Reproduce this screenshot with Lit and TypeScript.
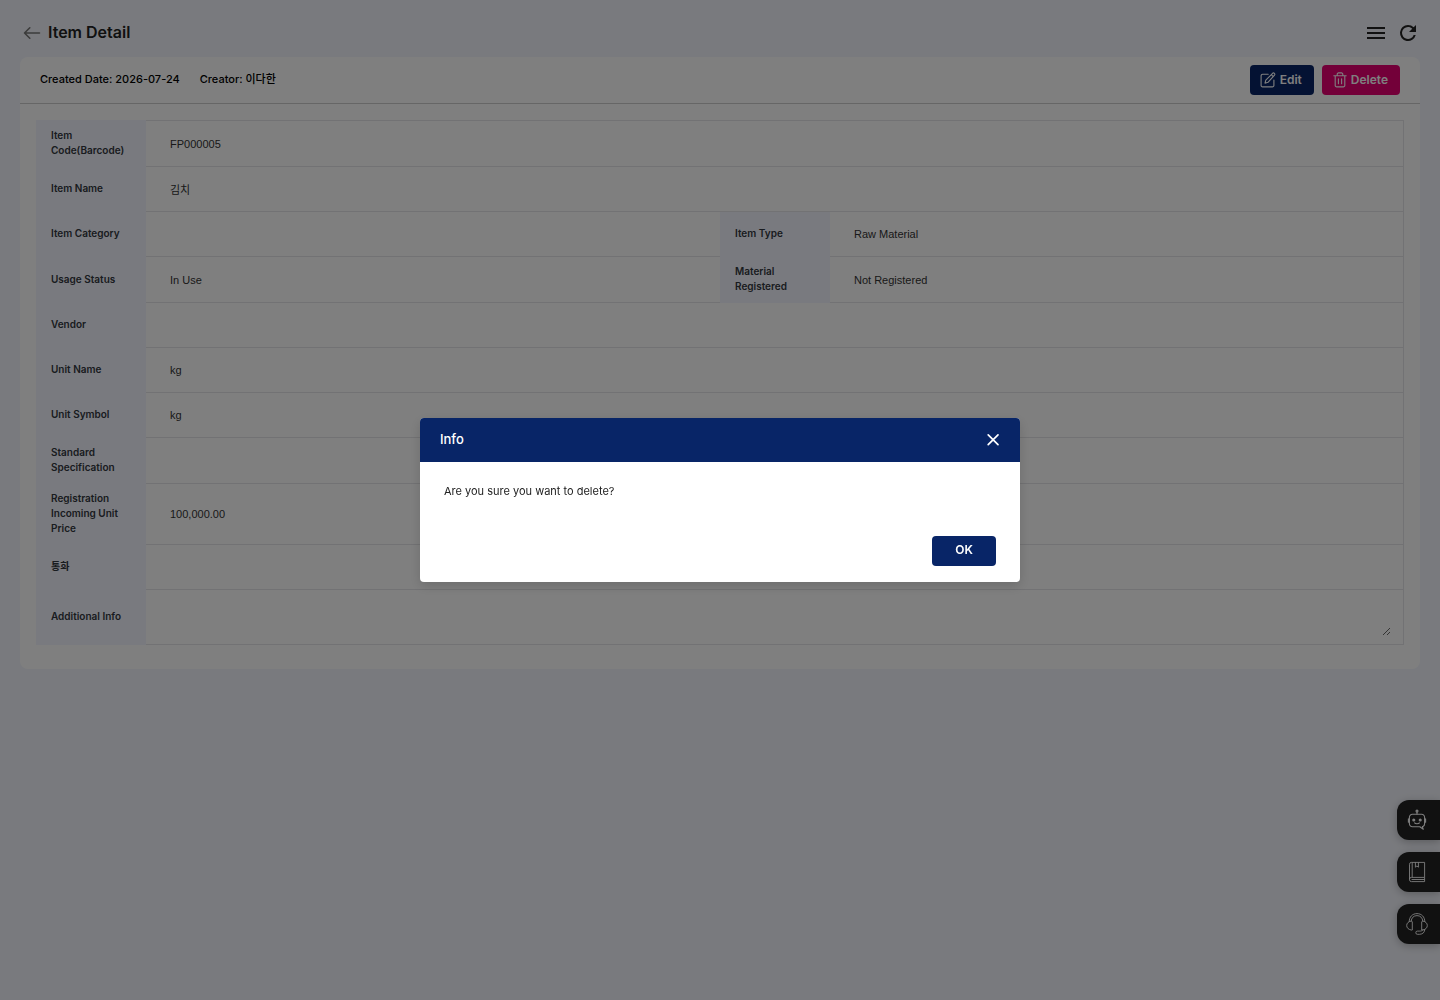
import { LitElement, html, css, svg, nothing } from "lit";
import { customElement, state } from "lit/decorators.js";

interface Field {
  id: string;
  label: string;
  value?: string;
  multiline?: boolean;
}

const ROWS: Field[][] = [
  [{ id: "code", label: "Item Code(Barcode)", value: "FP000005" }],
  [{ id: "name", label: "Item Name", value: "김치" }],
  [
    { id: "category", label: "Item Category" },
    { id: "type", label: "Item Type", value: "Raw Material" },
  ],
  [
    { id: "usage", label: "Usage Status", value: "In Use" },
    { id: "material", label: "Material Registered", value: "Not Registered" },
  ],
  [{ id: "vendor", label: "Vendor" }],
  [{ id: "unit-name", label: "Unit Name", value: "kg" }],
  [{ id: "unit-symbol", label: "Unit Symbol", value: "kg" }],
  [{ id: "spec", label: "Standard Specification" }],
  [{ id: "price", label: "Registration Incoming Unit Price", value: "100,000.00" }],
  [{ id: "currency", label: "통화" }],
  [{ id: "info", label: "Additional Info", multiline: true }],
];

const backIcon = svg`<svg width="18" height="14" viewBox="0 0 18 14" fill="none" stroke="currentColor" stroke-width="1.6" stroke-linecap="round" stroke-linejoin="round"><path d="M16.5 7H1.5M6.8 1.8 1.5 7l5.3 5.2"/></svg>`;
const menuIcon = svg`<svg width="24" height="24" viewBox="0 0 24 24" fill="currentColor"><path d="M3 18h18v-2H3v2zm0-5h18v-2H3v2zm0-7v2h18V6H3z"/></svg>`;
const refreshIcon = svg`<svg width="24" height="24" viewBox="0 0 24 24" fill="currentColor"><path d="M17.65 6.35A7.96 7.96 0 0 0 12 4a8 8 0 1 0 7.73 10h-2.08A6 6 0 1 1 12 6c1.66 0 3.14.69 4.22 1.78L13 11h7V4l-2.35 2.35z"/></svg>`;
const editIcon = svg`<svg width="16" height="16" viewBox="0 0 16 16" fill="none" stroke="currentColor" stroke-width="1.1" stroke-linecap="round" stroke-linejoin="round"><path d="M8.2 2.3H2.6a1.5 1.5 0 0 0-1.5 1.5v9.600a1.500 1.500 0 0 0 1.500 1.500h9.800a1.500 1.500 0 0 0 1.500-1.500V8"/><path d="M12.600 1.300a1.350 1.350 0 0 1 1.900 1.900L8 10.300l-3 .9.8-3 6.800-6.900zM11.300 2.700l1.900 1.900"/></svg>`;
const trashIcon = svg`<svg width="14" height="16" viewBox="0 0 14 16" fill="none" stroke="currentColor" stroke-width="1.1" stroke-linecap="round" stroke-linejoin="round"><path d="M.8 3.8h12.4M4.2 3.6V2.2A1.3 1.3 0 0 1 5.5.9h3a1.3 1.3 0 0 1 1.3 1.3v1.4M2.2 3.8v9.6a1.5 1.5 0 0 0 1.5 1.5h6.6a1.5 1.5 0 0 0 1.5-1.5V3.8M5.4 6.8v5M8.6 6.8v5"/></svg>`;
const closeIcon = svg`<svg width="14" height="14" viewBox="0 0 14 14" fill="none" stroke="currentColor" stroke-width="1.7" stroke-linecap="round"><path d="M2.2 1.800l9.800 9.800M12 1.800l-9.800 9.800"/></svg>`;
const botIcon = svg`<svg width="24" height="24" viewBox="0 0 24 24" fill="none" stroke="currentColor" stroke-width="1.1" stroke-linecap="round" stroke-linejoin="round"><path d="M7.4 6.300h9.200a3 3 0 0 1 3 3v6.400a3 3 0 0 1-1.600 2.700l-.6.2.9 2.700-3.500-2.600H7.400a3 3 0 0 1-3-3V9.300a3 3 0 0 1 3-3z"/><path d="M12 6.100V3.900"/><circle cx="12" cy="3.100" r="1"/><path d="M3.400 10.900v3.400M20.600 10.900v3.400M9.600 14.900c.8 1.200 4 1.200 4.800 0"/><circle cx="8.800" cy="12" r="1" fill="currentColor"/><circle cx="15.200" cy="12" r="1" fill="currentColor"/></svg>`;
const bookIcon = svg`<svg width="24" height="24" viewBox="0 0 24 24" fill="none" stroke="currentColor" stroke-width=".9" stroke-linejoin="round"><path d="M19.6 17.4V2.4H6.4a1.900 1.900 0 0 0-1.900 1.900v15.400a1.900 1.900 0 0 0 1.900 1.900h13.200v-4.200H6.400a1.900 1.900 0 0 0-1.900 2.100M7.200 2.400v15M6.600 19.500h13M10.400 2.400v4.800l1.500-1.200 1.500 1.200V2.400"/></svg>`;
const headsetIcon = svg`<svg width="24" height="24" viewBox="0 0 24 24" fill="none" stroke="currentColor" stroke-width=".9" stroke-linecap="round" stroke-linejoin="round"><path d="M4.200 9.500C4.200 4.800 7.500 1.600 12 1.600s7.800 3.200 7.800 7.900M6.200 9.100C6.400 5.800 8.600 3.600 12 3.600s5.600 2.200 5.800 5.500"/><path d="M7.300 17.600V9.700L6.200 9C3.400 9.600 1.700 11.200 1.700 13.500s1.600 3.900 4.300 4.500zM16.700 17.600V9.700l1.100-.7c2.800.6 4.500 2.200 4.500 4.500s-1.600 3.900-4.300 4.500z"/><path d="M19.800 17.500c-.2 3-2 4.600-5.200 4.800h-2.200a1.600 1.600 0 0 1 0-3.200h1.800c2.200 0 3.400-.3 3.600-1.300"/></svg>`;

@customElement("app-root")
export class AppRoot extends LitElement {
  @state() private confirmOpen = true;

  static styles = css`
    :host {
      display: block;
      position: relative;
      min-height: 100vh;
      box-sizing: border-box;
      padding: 0 20px;
      background: #f3f5fc;
      color: #222;
      font-family: Inter, "Noto Sans CJK KR", sans-serif;
      overflow: hidden;
    }
    *, *::before, *::after { box-sizing: border-box; }
    svg { display: block; flex: none; }
    button {
      display: flex;
      align-items: center;
      justify-content: center;
      margin: 0;
      border: 0;
      padding: 0;
      background: none;
      color: inherit;
      font: inherit;
      cursor: pointer;
    }
    .topbar {
      display: flex;
      align-items: center;
      gap: 8px;
      padding: 21px 0 12px;
    }
    .back { width: 20px; height: 24px; padding-left: 3px; color: #777; }
    h1 { flex: 1; margin: 0; padding-bottom: 2px; font-size: 16px; line-height: 22px; font-weight: 600; }
    .card { border-radius: 8px; background: #fff; overflow: hidden; }
    .card-head {
      display: flex;
      align-items: center;
      gap: 20px;
      min-height: 47px;
      padding: 0 20px;
      border-bottom: 1px solid #ccc;
      color: #000;
      font-size: 11px;
      line-height: 16px;
      font-weight: 500;
    }
    .meta { padding-bottom: 2px; }
    .actions { display: flex; gap: 8px; margin-left: auto; }
    .btn {
      height: 30px;
      padding: 0 12px;
      border-radius: 4px;
      color: #fff;
      background: #082567;
      font-size: 12px;
      line-height: 16px;
      font-weight: 600;
      gap: 4px;
    }
    .edit { padding: 0 12px 0 10px; }
    .delete { padding: 0 12px 0 11px; background: #e60073; }
    .card-body { padding: 16px 16px 24px; }
    table { width: 100%; border-spacing: 0; table-layout: fixed; }
    .label-col { width: 110px; }
    th {
      padding: 7px 15px 9px;
      background: #f2f4ff;
      color: #333840;
      font-size: 10px;
      line-height: 15px;
      font-weight: 600;
      text-align: left;
    }
    td { height: 45px; padding: 0; border-bottom: 1px solid #e5e5e8; }
    td:last-child { border-right: 1px solid #e5e5e8; }
    tr:first-child td { border-top: 1px solid #e5e5e8; }
    tr:first-child th { border-top: 1px solid #f2f4ff; }
    .field {
      display: block;
      width: 100%;
      height: 30px;
      margin: 0;
      border: 0;
      padding: 0 24px;
      outline: 0;
      background: transparent;
      color: #333;
      font-family: "Liberation Sans", "Noto Sans CJK KR", sans-serif;
      font-size: 11px;
    }
    .area-cell { padding: 6px 12px 8px; }
    textarea.field { height: 40px; padding: 6px 12px; }

    .tabs {
      position: absolute;
      right: 0;
      top: 800px;
      display: flex;
      flex-direction: column;
      gap: 12px;
    }
    .tab {
      justify-content: flex-start;
      width: 43px;
      height: 40px;
      padding-left: 8px;
      border-radius: 12px 0 0 12px;
      background: #222;
      color: #fff;
      box-shadow: 0 2px 8px rgba(0, 0, 0, 0.25);
    }

    .overlay {
      position: fixed;
      inset: 0;
      display: flex;
      align-items: center;
      justify-content: center;
      background: rgba(0, 0, 0, 0.5);
    }
    .modal {
      width: 600px;
      max-width: 90%;
      border-radius: 4px;
      background: #fff;
      overflow: hidden;
      box-shadow: 0 4px 12px rgba(0, 0, 0, 0.15);
    }
    .modal-head {
      display: flex;
      align-items: center;
      justify-content: space-between;
      height: 44px;
      padding: 0 20px;
      background: #082567;
      color: #fff;
    }
    h2 { margin: 0; padding-bottom: 2px; font-size: 13px; line-height: 20px; font-weight: 500; }
    .modal-body { padding: 20px 24px 16px; }
    .modal-body p { margin: 0 0 36px; font-size: 11px; line-height: 18px; }
    .modal-foot { display: flex; justify-content: flex-end; }
    .ok { min-width: 64px; padding-bottom: 2px; }
  `;

  private close = () => {
    this.confirmOpen = false;
  };

  private open = () => {
    this.confirmOpen = true;
  };

  private renderField(f: Field, span: number) {
    return html`
      <th scope="row"><label for=${f.id}>${f.label}</label></th>
      <td colspan=${span} class=${f.multiline ? "area-cell" : ""}>
        ${f.multiline
          ? html`<textarea class="field" id=${f.id} readonly></textarea>`
          : html`<input class="field" id=${f.id} type="text" readonly .value=${f.value ?? ""} />`}
      </td>
    `;
  }

  render() {
    return html`
      <header class="topbar">
        <button class="back" aria-label="Back">${backIcon}</button>
        <h1>Item Detail</h1>
        <button aria-label="Menu">${menuIcon}</button>
        <button aria-label="Refresh">${refreshIcon}</button>
      </header>
      <main class="card">
        <div class="card-head">
          <span class="meta">Created Date: 2026-07-24</span>
          <span class="meta">Creator: 이다한</span>
          <div class="actions">
            <button class="btn edit">${editIcon}Edit</button>
            <button class="btn delete" @click=${this.open}>${trashIcon}Delete</button>
          </div>
        </div>
        <div class="card-body">
          <table>
            <colgroup>
              <col class="label-col" /><col /><col class="label-col" /><col />
            </colgroup>
            <tbody>
              ${ROWS.map(
                (row) => html`<tr>${row.map((f) => this.renderField(f, row.length === 1 ? 3 : 1))}</tr>`
              )}
            </tbody>
          </table>
        </div>
      </main>
      <nav class="tabs" aria-label="Support">
        <button class="tab" aria-label="Chatbot">${botIcon}</button>
        <button class="tab" aria-label="Manual">${bookIcon}</button>
        <button class="tab" aria-label="Customer support">${headsetIcon}</button>
      </nav>
      ${this.confirmOpen
        ? html`<div class="overlay">
            <section class="modal" role="dialog" aria-modal="true" aria-labelledby="modal-title">
              <div class="modal-head">
                <h2 id="modal-title">Info</h2>
                <button aria-label="Close" @click=${this.close}>${closeIcon}</button>
              </div>
              <div class="modal-body">
                <p>Are you sure you want to delete?</p>
                <div class="modal-foot">
                  <button class="btn ok" @click=${this.close}>OK</button>
                </div>
              </div>
            </section>
          </div>`
        : nothing}
    `;
  }
}
